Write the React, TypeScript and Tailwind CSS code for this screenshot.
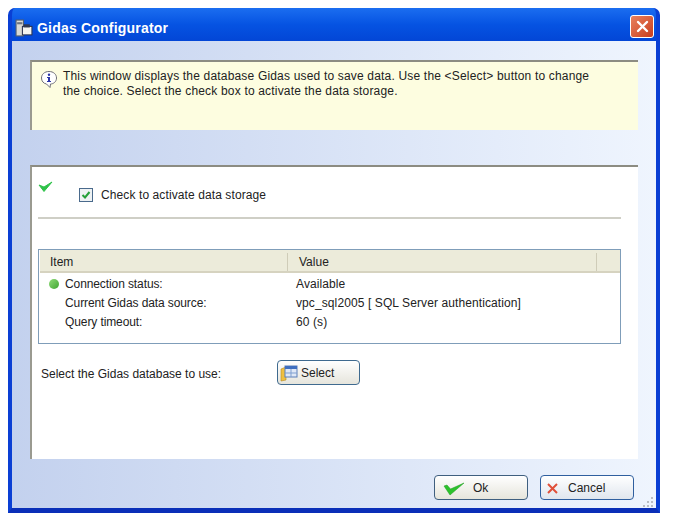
import React from 'react';

const font = { fontFamily: '"Liberation Sans", Arial, sans-serif' };

const Row = ({ label, value, dot }: { label: string; value: string; dot?: boolean }) => (
  <div className="flex h-[19px] items-center text-[12px] text-[#222]">
    <div className="flex w-[24px] justify-end pr-[5px]">
      {dot && <span className="h-[10px] w-[10px] rounded-full bg-gradient-to-br from-[#8fdc78] to-[#3da52f]" />}
    </div>
    <div className="w-[232px] pl-[1px] tracking-[-0.1px]">{label}</div>
    <div className="tracking-[0.1px]">{value}</div>
  </div>
);

export default function App() {
  return (
    <div className="min-h-[523px] w-[686px] overflow-hidden bg-white pl-2 pt-2" style={font}>
      {/* WINDOW */}
      <div className="flex h-[505px] w-[652px] flex-col overflow-hidden rounded-t-[7px] border-x-[4px] border-b-[5px] border-x-[#0a3fd4] border-b-[#0a2fb8] bg-[#0a3fd4]">
        {/* TITLE BAR */}
        <div className="-mx-[4px] flex h-[33px] shrink-0 items-center bg-gradient-to-b from-[#1b6df0] via-[#0653e2] to-[#0346d6] pl-[7px] pr-[6px] pt-[7px]">
          <svg width="18" height="18" viewBox="0 0 17 17" className="shrink-0">
            <rect x="1" y="1" width="7" height="15" fill="#d9d9d4" stroke="#55606e" />
            <rect x="2" y="3" width="5" height="2" fill="#6d7480" />
            <rect x="7" y="7" width="9" height="8" fill="#f4f4f0" stroke="#2c3550" />
            <rect x="8" y="5" width="6" height="3" fill="#30384e" />
          </svg>
          <span className="ml-[4px] text-[14px] font-bold tracking-[0.2px] text-white">Gidas Configurator</span>
          <div className="ml-auto flex h-[23px] w-[24px] -translate-y-[2px] items-center justify-center rounded-[3px] border border-white bg-gradient-to-br from-[#e8805c] to-[#c93c1c]">
            <svg width="13" height="13" viewBox="0 0 13 13">
              <path d="M2 2 L11 11 M11 2 L2 11" stroke="#fff" strokeWidth="2.4" strokeLinecap="round" />
            </svg>
          </div>
        </div>

        {/* CLIENT AREA */}
        <div className="flex min-h-0 flex-1 flex-col bg-gradient-to-r from-[#c3d1ee] to-[#eff5fe] pl-[18px] pr-[18px]">
          {/* INFO PANEL */}
          <div className="mt-[19px] h-[70px] w-[608px] shrink-0 border-l-[2px] border-t-[2px] border-l-[#9a9a90] border-t-[#8c8c82] bg-[#fdfde0] pl-[8px] pt-[7px]">
            <div className="flex items-start">
              <svg width="18" height="19" viewBox="0 0 18 19" className="mt-[1px] shrink-0">
                <path d="M9 1.5 C13.5 1.5 16.5 4.3 16.5 8 C16.5 11.7 13.5 14 10.5 14 L10 17.5 L6.5 14 C3.5 13.5 1.5 11.2 1.5 8 C1.5 4.3 4.5 1.5 9 1.5 Z" fill="#fff" stroke="#6f6f78" />
                <circle cx="9" cy="4.8" r="1.2" fill="#2a35a8" />
                <path d="M7 7 H10 V11 H11 V12 H7 V11 H8 V8 H7 Z" fill="#2a35a8" />
              </svg>
              <p className="ml-[5px] w-[570px] text-[12px] leading-[15px] tracking-[0.18px] text-[#222]">
                This window displays the database Gidas used to save data. Use the &lt;Select&gt; button to change<br />
                the choice. Select the check box to activate the data storage.
              </p>
            </div>
          </div>

          {/* MAIN PANEL */}
          <div className="mt-[35px] h-[294px] w-[608px] shrink-0 border-l-[2px] border-t-[2px] border-l-[#9a9a90] border-t-[#8c8c82] bg-white pl-[6px]">
            <div className="flex h-[50px] items-start">
              <svg width="15" height="12" viewBox="0 0 15 12" className="mt-[14px] shrink-0">
                <path d="M1 4 L6 10.5 L14 1 L6 6 Z" fill="#2fc24a" stroke="#2fc24a" strokeLinejoin="round" />
              </svg>
              <div className="ml-[26px] mt-[19px] flex items-center">
                <span className="flex h-[14px] w-[14px] items-center justify-center border border-[#4a6a8c] bg-[#eef2f4]">
                  <svg width="10" height="10" viewBox="0 0 10 10">
                    <path d="M1.5 5 L4 7.5 L8.5 2" fill="none" stroke="#25a03a" strokeWidth="2" />
                  </svg>
                </span>
                <span className="ml-[8px] text-[12px] tracking-[0.1px] text-[#222]">Check to activate data storage</span>
              </div>
            </div>

            <div className="h-[2px] w-[583px] bg-[#cfcfc6]" />

            {/* TABLE */}
            <div className="mt-[30px] h-[95px] w-[583px] border border-[#7f9db9] bg-white pl-[1px]">
              <div className="mb-[1px] flex h-[23px] w-[580px] border-b-[2px] border-b-[#d6d3c0] bg-[#ecebda] pt-[3px] text-[12px] text-[#222]">
                <div className="flex w-[248px] items-center border-r border-r-[#cfccb8] pl-[10px]">Item</div>
                <div className="flex w-[309px] items-center border-r border-r-[#cfccb8] pl-[11px]">Value</div>
              </div>
              <Row dot label="Connection status:" value="Available" />
              <Row label="Current Gidas data source:" value="vpc_sql2005 [ SQL Server authentication]" />
              <Row label="Query timeout:" value="60 (s)" />
            </div>

            {/* SELECT ROW */}
            <div className="mt-[16px] flex items-center">
              <span className="ml-[3px] w-[236px] translate-y-[1px] text-[12px] text-[#222]">Select the Gidas database to use:</span>
              <button className="flex h-[25px] w-[83px] items-center rounded-[4px] border-[1.5px] border-[#3f6a8f] bg-gradient-to-b from-white to-[#e6e5dc] pl-[2px] text-[12px] text-[#222]">
                <svg width="18" height="18" viewBox="0 0 18 18" className="shrink-0">
                  <path d="M1 5 L6 3 V16 L1 17 Z" fill="#f0c040" stroke="#b58a20" strokeWidth="0.6" />
                  <rect x="5" y="2" width="12" height="11" fill="#dfe8f6" stroke="#5a7fb8" />
                  <rect x="5" y="2" width="12" height="3" fill="#3f6fc0" />
                  <path d="M11 5 V13 M5 9 H17" stroke="#7f9fd0" />
                </svg>
                <span className="ml-[3px]">Select</span>
              </button>
            </div>
          </div>

          {/* FOOTER BUTTONS */}
          <div className="relative flex flex-1 justify-end gap-[12px] pr-[4px] pt-[16px]">
            <button className="flex h-[25px] w-[94px] items-center rounded-[4px] border-[1.5px] border-[#3f5f7f] bg-gradient-to-b from-white to-[#e6e5dc] pb-[0px] pl-[8px] pt-[1px] text-[12px] text-[#222]">
              <svg width="22" height="15" viewBox="0 0 22 15" className="shrink-0">
                <path d="M1 5 L7 14 L21 2 L7.5 8 L4 4 Z" fill="#2cc22c" stroke="#1c9a1c" strokeWidth="0.5" />
              </svg>
              <span className="ml-[8px]">Ok</span>
            </button>
            <button className="flex h-[25px] w-[94px] items-center rounded-[4px] border-[1.5px] border-[#2f5f9f] bg-gradient-to-b from-white to-[#e0e6ee] pl-[5px] pt-[1px] text-[12px] text-[#222]">
              <svg width="13" height="13" viewBox="0 0 13 13" className="shrink-0">
                <path d="M2 2 L11 11 M11 2 L2 11" stroke="#e0503a" strokeWidth="2" />
              </svg>
              <span className="ml-[9px]">Cancel</span>
            </button>
            {/* GRIP */}
            <svg width="12" height="12" viewBox="0 0 12 12" className="absolute bottom-[0px] right-[-16px]">
              <path d="M9 1h2v2H9zM5 5h2v2H5zM9 5h2v2H9zM1 9h2v2H1zM5 9h2v2H5zM9 9h2v2H9z" fill="#b9bdc4" />
            </svg>
          </div>
        </div>
      </div>
    </div>
  );
}
